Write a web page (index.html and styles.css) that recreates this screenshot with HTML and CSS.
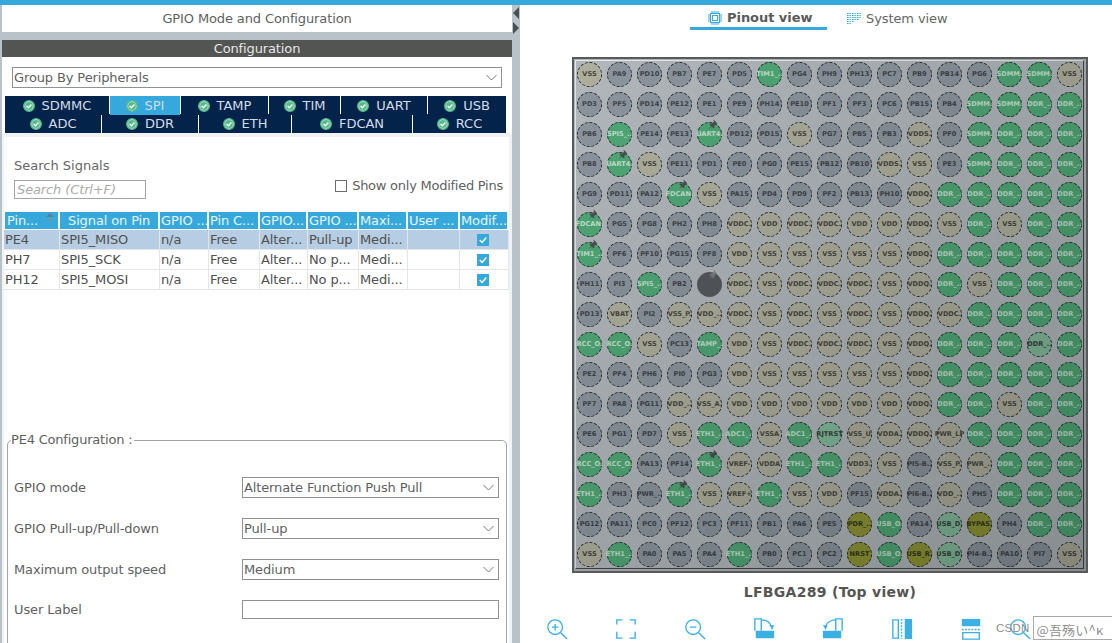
FILE: index.html
```html
<!DOCTYPE html>
<html lang="en">
<head>
<meta charset="utf-8">
<title>GPIO Mode and Configuration</title>
<link rel="stylesheet" href="styles.css">
</head>
<body>
<svg class="defs" width="0" height="0">
  <symbol id="ok" viewBox="0 0 12 12"><circle cx="6" cy="6" r="5.2" fill="#fff" stroke="#55b98a" stroke-width="1.6"/><circle cx="6" cy="6" r="3.9" fill="#55b98a"/><path d="M3.6 6l1.8 1.8 3-3.2" fill="none" stroke="#fff" stroke-width="1.4"/></symbol>
  <symbol id="chev" viewBox="0 0 12 7"><path d="M1 1l5 5 5-5" fill="none" stroke="#777" stroke-width="1"/></symbol>
  <symbol id="tick" viewBox="0 0 12 12"><rect width="12" height="12" fill="#36a9dc"/><path d="M2.8 6l2.3 2.4 4.2-5" fill="none" stroke="#fff" stroke-width="1.5"/></symbol>
  <symbol id="push" viewBox="0 0 10 10"><path d="M6 .5l3.500 3.500-1.500.5-1.500 2 .3 1.500-1 .5-1.500-1.500-3 2.500 2.500-3-1.500-1.500.5-1 1.500.3 2-1.500z" fill="#4b4f52"/></symbol>
</svg>
<div class="topbar"></div>
<div class="main">
  <section class="left">
    <h1 class="title">GPIO Mode and Configuration</h1>
    <div class="confhead">Configuration</div>
    <div class="upper">
      <div class="select groupby"><span>Group By Peripherals</span><svg class="chev"><use href="#chev"/></svg></div>
      <div class="tabs row1">
        <div class="tab"><svg class="ok"><use href="#ok"/></svg>SDMMC</div>
        <div class="tab active"><svg class="ok"><use href="#ok"/></svg>SPI</div>
        <div class="tab"><svg class="ok"><use href="#ok"/></svg>TAMP</div>
        <div class="tab"><svg class="ok"><use href="#ok"/></svg>TIM</div>
        <div class="tab"><svg class="ok"><use href="#ok"/></svg>UART</div>
        <div class="tab"><svg class="ok"><use href="#ok"/></svg>USB</div>
      </div>
      <div class="tabs row2">
        <div class="tab"><svg class="ok"><use href="#ok"/></svg>ADC</div>
        <div class="tab"><svg class="ok"><use href="#ok"/></svg>DDR</div>
        <div class="tab"><svg class="ok"><use href="#ok"/></svg>ETH</div>
        <div class="tab"><svg class="ok"><use href="#ok"/></svg>FDCAN</div>
        <div class="tab"><svg class="ok"><use href="#ok"/></svg>RCC</div>
      </div>
    </div>
    <div class="lower">
      <div class="inner">
        <div class="searchrow">
          <div class="searchcol">
            <div class="searchlabel">Search Signals</div>
            <div class="searchbox">Search (Ctrl+F)</div>
          </div>
          <label class="modified"><span class="box"></span>Show only Modified Pins</label>
        </div>
        <table class="signals">
          <colgroup><col class="c1"><col class="c2"><col class="c3"><col class="c4"><col class="c5"><col class="c6"><col class="c7"><col class="c8"><col class="c9"></colgroup>
          <thead>
            <tr><th class="first">Pin...<span class="sort"></span></th><th class="ctr">Signal on Pin</th><th>GPIO ...</th><th>Pin C...</th><th>GPIO...</th><th>GPIO ...</th><th>Maxi...</th><th>User ...</th><th>Modif...</th></tr>
          </thead>
          <tbody>
            <tr class="sel"><td>PE4</td><td>SPI5_MISO</td><td>n/a</td><td>Free</td><td>Alter...</td><td>Pull-up</td><td>Medi...</td><td></td><td class="chk"><svg class="tick"><use href="#tick"/></svg></td></tr>
            <tr><td>PH7</td><td>SPI5_SCK</td><td>n/a</td><td>Free</td><td>Alter...</td><td>No p...</td><td>Medi...</td><td></td><td class="chk"><svg class="tick"><use href="#tick"/></svg></td></tr>
            <tr><td>PH12</td><td>SPI5_MOSI</td><td>n/a</td><td>Free</td><td>Alter...</td><td>No p...</td><td>Medi...</td><td></td><td class="chk"><svg class="tick"><use href="#tick"/></svg></td></tr>
          </tbody>
        </table>
        <fieldset class="pinconf">
          <legend>PE4 Configuration :</legend>
          <div class="formrow"><span>GPIO mode</span><div class="select"><span>Alternate Function Push Pull</span><svg class="chev"><use href="#chev"/></svg></div></div>
          <div class="formrow"><span>GPIO Pull-up/Pull-down</span><div class="select"><span>Pull-up</span><svg class="chev"><use href="#chev"/></svg></div></div>
          <div class="formrow"><span>Maximum output speed</span><div class="select"><span>Medium</span><svg class="chev"><use href="#chev"/></svg></div></div>
          <div class="formrow lastrow"><span>User Label</span><div class="select text"></div></div>
        </fieldset>
      </div>
    </div>
  </section>
  <div class="gutter"><span class="arrow back"></span><span class="arrow fwd"></span></div>
  <section class="right">
    <nav class="views">
      <div class="view on">
        <svg class="vicon" viewBox="0 0 14 14"><rect x="2.500" y="2.500" width="9" height="9" fill="none" stroke="#36a9dc"/><rect x="4.500" y="4.500" width="5" height="5" fill="none" stroke="#36a9dc"/><path d="M4 0v2M6 0v2M8 0v2M10 0v2M4 12v2M6 12v2M8 12v2M10 12v2M0 4h2M0 6h2M0 8h2M0 10h2M12 4h2M12 6h2M12 8h2M12 10h2" stroke="#36a9dc"/></svg>
        <span>Pinout view</span>
      </div>
      <div class="view off">
        <svg class="vicon" viewBox="0 0 14 14"><path d="M0 1.500h4M5 1.500h4M10 1.500h4M0 3.500h4M5 3.500h4M10 3.500h4M0 5.500h4M5 5.500h4M10 5.500h4M0 7.500h4M5 7.500h4M10 7.500h2M0 9.500h4M5 9.500h2M0 11.500h4" stroke="#36a9dc" stroke-dasharray="1 .4"/></svg>
        <span>System view</span>
      </div>
    </nav>
    <div class="package">
      <div class="die">
<i class="v">VSS</i><i>PA9</i><i>PD10</i><i>PB7</i><i>PE7</i><i>PD5</i><i class="g">TIM1_..</i><i>PG4</i><i>PH9</i><i>PH13</i><i>PC7</i><i>PB9</i><i>PB14</i><i>PG6</i><i class="g">SDMM.</i><i class="g">SDMM.</i><i class="v">VSS</i>
<i>PD3</i><i>PF5</i><i>PD14</i><i>PE12</i><i>PE1</i><i>PE9</i><i>PH14</i><i>PE10</i><i>PF1</i><i>PF3</i><i>PC6</i><i>PB15</i><i>PB4</i><i class="g">SDMM.</i><i class="g">SDMM.</i><i class="g">DDR_..</i><i class="g">DDR_..</i>
<i>PB6</i><i class="g">SPI5_..</i><i>PE14</i><i>PE13</i><i class="g">UART4.<svg class="push"><use href="#push"/></svg></i><i>PD12</i><i>PD15</i><i class="v">VSS</i><i>PG7</i><i>PB5</i><i>PB3</i><i class="v">VDDS.</i><i>PF0</i><i class="g">SDMM.</i><i class="g">DDR_..</i><i class="g">DDR_..</i><i class="g">DDR_..</i>
<i>PB8</i><i class="g">UART4.<svg class="push"><use href="#push"/></svg></i><i class="v">VSS</i><i>PE11</i><i>PD1</i><i>PE0</i><i>PG0</i><i>PE15</i><i>PB12</i><i>PB10</i><i class="v">VDDS.</i><i class="v">VSS</i><i>PE3</i><i class="g">SDMM.</i><i class="g">DDR_..</i><i class="g">DDR_..</i><i class="g">DDR_..</i>
<i>PG9</i><i>PD11</i><i>PA12</i><i class="g">FDCAN.<svg class="push"><use href="#push"/></svg></i><i class="v">VSS</i><i>PA15</i><i>PD4</i><i>PD9</i><i>PF2</i><i>PB13</i><i>PH10</i><i class="v">VDDQ.</i><i class="g">DDR_..</i><i class="g">DDR_..</i><i class="g">DDR_..</i><i class="g">DDR_..</i><i class="g">DDR_..</i>
<i class="g">FDCAN.<svg class="push"><use href="#push"/></svg></i><i>PG5</i><i>PG8</i><i>PH2</i><i>PH8</i><i class="v">VDDC.</i><i class="v">VDD</i><i class="v">VDDC.</i><i class="v">VDDC.</i><i class="v">VDD</i><i class="v">VDD</i><i class="v">VDDQ.</i><i class="v">VSS</i><i class="g">DDR_..</i><i class="v">VSS</i><i class="g">DDR_..</i><i class="g">DDR_..</i>
<i class="g">TIM1_..<svg class="push"><use href="#push"/></svg></i><i>PF6</i><i>PF10</i><i>PG15</i><i>PF8</i><i class="v">VDD</i><i class="v">VSS</i><i class="v">VSS</i><i class="v">VSS</i><i class="v">VSS</i><i class="v">VSS</i><i class="v">VDDQ.</i><i class="g">DDR_..</i><i class="g">DDR_..</i><i class="g">DDR_..</i><i class="g">DDR_..</i><i class="g">DDR_..</i>
<i>PH11</i><i>PI3</i><i class="g">SPI5_..</i><i>PB2</i><i class="d"><svg class="push"><use href="#push"/></svg></i><i class="v">VDDC.</i><i class="v">VSS</i><i class="v">VDDC.</i><i class="v">VDDC.</i><i class="v">VDDC.</i><i class="v">VSS</i><i class="v">VDDQ.</i><i class="g">DDR_..</i><i class="v">VSS</i><i class="g">DDR_..</i><i class="g">DDR_..</i><i class="g">DDR_..</i>
<i>PD13</i><i class="v">VBAT</i><i>PI2</i><i class="v">VSS_P.</i><i class="v">VDD_..</i><i class="v">VDDC.</i><i class="v">VSS</i><i class="v">VDDC.</i><i class="v">VSS</i><i class="v">VDDC.</i><i class="v">VSS</i><i class="v">VDDQ.</i><i class="v">VDDC.</i><i class="g">DDR_..</i><i class="g">DDR_..</i><i class="g">DDR_..</i><i class="g">DDR_..</i>
<i class="g">RCC_O.</i><i class="g">RCC_O.</i><i class="v">VSS</i><i>PC13</i><i class="g">TAMP_.</i><i class="v">VDD</i><i class="v">VSS</i><i class="v">VDDC.</i><i class="v">VDDC.</i><i class="v">VDDC.</i><i class="v">VSS</i><i class="v">VDDQ.</i><i class="g">DDR_..</i><i class="g">DDR_..</i><i class="g">DDR_..</i><i class="l">DDR_..</i><i class="g">DDR_..</i>
<i>PE2</i><i>PF4</i><i>PH6</i><i>PI0</i><i>PG3</i><i class="v">VDD</i><i class="v">VSS</i><i class="v">VSS</i><i class="v">VSS</i><i class="v">VSS</i><i class="v">VSS</i><i class="v">VDDQ.</i><i class="g">DDR_..</i><i class="g">DDR_..</i><i class="g">DDR_..</i><i class="g">DDR_..</i><i class="g">DDR_..</i>
<i>PF7</i><i>PA8</i><i>PG11</i><i class="v">VDD_..</i><i class="v">VSS_A.</i><i class="v">VDD</i><i class="v">VDD</i><i class="v">VDD</i><i class="v">VDD</i><i class="v">VDD</i><i class="v">VDD</i><i class="v">VDDQ.</i><i class="g">DDR_..</i><i class="g">DDR_..</i><i class="v">VSS</i><i class="g">DDR_..</i><i class="g">DDR_..</i>
<i>PE6</i><i>PG1</i><i>PD7</i><i class="v">VSS</i><i class="g">ETH1_..</i><i class="g">ADC1_..</i><i class="v">VSSA</i><i class="g">ADC1_..</i><i class="l">RJTRST</i><i class="v">VSS_U</i><i class="v">VDDA.</i><i class="v">VDDQ.</i><i class="v">PWR_LP</i><i class="g">DDR_..</i><i class="g">DDR_..</i><i class="g">DDR_..</i><i class="g">DDR_..</i>
<i class="g">RCC_O.</i><i class="g">RCC_O.</i><i>PA13</i><i>PF14</i><i class="g">ETH1_..<svg class="push"><use href="#push"/></svg></i><i class="v">VREF-</i><i class="v">VDDA</i><i class="g">ETH1_..</i><i class="g">ETH1_..</i><i class="v">VDD3.</i><i class="v">VSS</i><i>PI5-B..</i><i class="v">VSS_P.</i><i class="v">PWR_..</i><i class="g">DDR_..</i><i class="g">DDR_..</i><i class="g">DDR_..</i>
<i class="g">ETH1_..</i><i>PH3</i><i>PWR_..</i><i class="g">ETH1_..<svg class="push"><use href="#push"/></svg></i><i class="v">VSS</i><i class="v">VREF+</i><i class="g">ETH1_..</i><i class="v">VSS</i><i class="v">VDD</i><i>PF15</i><i class="v">VDDA.</i><i>PI6-B..</i><i class="v">VDD_..</i><i>PH5</i><i class="g">DDR_..</i><i class="g">DDR_..</i><i class="g">DDR_..</i>
<i>PG12</i><i>PA11</i><i>PC0</i><i>PF12</i><i>PC3</i><i>PF11</i><i>PB1</i><i>PA6</i><i>PE5</i><i class="o">PDR_..</i><i class="g">USB_O.</i><i>PA14</i><i class="l">USB_D.</i><i class="o">BYPAS.</i><i>PH4</i><i class="g">DDR_..</i><i class="g">DDR_..</i>
<i class="v">VSS</i><i class="g">ETH1_..</i><i>PA0</i><i>PA5</i><i>PA4</i><i class="g">ETH1_..</i><i>PB0</i><i>PC1</i><i>PC2</i><i class="o">NRST</i><i class="g">USB_O.</i><i class="o">USB_R.</i><i class="l">USB_D.</i><i>PI4-B..</i><i>PA10</i><i>PI7</i><i class="v">VSS</i>
      </div>
    </div>
    <div class="pkgname">LFBGA289 (Top view)</div>
    <div class="toolbar">
      <svg class="tool" viewBox="0 0 24 24"><circle cx="10" cy="10" r="8"/><path d="M16 16l7 7M6.500 10h7M10 6.500v7"/></svg>
      <svg class="tool" viewBox="0 0 24 24"><path d="M2 7V2h6M16 2h6v5M22 15v7h-6M8 22H2v-7"/></svg>
      <svg class="tool" viewBox="0 0 24 24"><circle cx="10" cy="10" r="8"/><path d="M16 16l7 7M6.500 10h7"/></svg>
      <svg class="tool" viewBox="0 0 24 24"><path d="M2 14V1h7v13M9 2c5 0 9 2 11 7"/><path class="fill" d="M18 8h5l-2 5zM3 14h20v8H3z"/></svg>
      <svg class="tool" viewBox="0 0 24 24"><path d="M22 14V1h-7v13M15 2c-5 0-9 2-11 7"/><path class="fill" d="M1 8h5l-2 5zM1 14h20v8H1z"/></svg>
      <svg class="tool" viewBox="0 0 24 24"><path d="M2 2h6v20H2z"/><path class="dash" d="M11.500 1v22"/><path class="fill" d="M15 1h8v22h-8z"/></svg>
      <svg class="tool" viewBox="0 0 24 24"><path class="fill" d="M2 1h20v8H2z"/><path class="dash" d="M2 12.500h20"/><path d="M3 16h18v7H3z"/></svg>
      <svg class="tool last" viewBox="0 0 24 24"><circle cx="10" cy="10" r="8"/><path d="M16 16l7 7"/></svg>
    </div>
    <div class="watermark"><span>CSDN</span><div class="wmbox">@吾殇い^κ</div></div>
  </section>
</div>
</body>
</html>
```
FILE: styles.css
```css
*{box-sizing:border-box}
html,body{margin:0;padding:0;height:643px;overflow:hidden;background:#fff}
body{font:13px/1.2 "DejaVu Sans",Verdana,sans-serif;color:#5a5a5a;letter-spacing:-.12px}
.defs{position:absolute}
.topbar{height:5px;background:#36a9dc}
.main{display:flex;height:638px;overflow:hidden}

/* left panel */
.left{width:512px;background:#b8c2c8;padding-left:2px;display:flex;flex-direction:column;overflow:hidden}
.title{margin:0;height:27px;background:#fff;font:400 13px/27px "DejaVu Sans",sans-serif;text-align:center;color:#5f5f5f}
.confhead{margin-top:8px;height:17px;background:#535553;color:#e6e6e6;font-size:13px;line-height:17px;text-align:center;flex:none}
.upper{background:#fff;height:76px;padding:10px 6px 0 3px;flex:none}
.select{display:flex;align-items:center;justify-content:space-between;height:21px;border:1px solid #8f9294;background:#fff;padding:0 3px 0 1px;color:#5f5f5f;line-height:19px;white-space:nowrap}
.groupby{margin-left:7px;width:490px}
.chev{width:13px;height:7px;flex:none}
.tabs{display:grid;column-gap:1px}
.row1{margin-top:8px;height:17px;grid-template-columns:104px 70px 87px 71px 86px 78px}
.row2{margin-top:1px;height:19px;grid-template-columns:96px 96px 92px 120px 93px}
.tab{background:#03234b;color:#d3dde8;display:flex;align-items:center;justify-content:center;gap:7px;font-size:13px;line-height:1;letter-spacing:0}
.tab.active{background:#36a9dc;height:19px;position:relative}
.ok{width:12px;height:12px;flex:none}
.lower{flex:1;background:#f0f2f4;padding:4px 3px 0 2px;min-height:0}
.inner{background:#fff;height:100%}
.searchrow{display:flex;justify-content:space-between;height:75px;padding:21px 6px 0 10px}
.searchlabel{color:#666;line-height:16px;letter-spacing:0}
.searchbox{margin-top:6px;width:132px;height:19px;border:1px solid #a3a6a8;color:#aaa;font-style:italic;line-height:17px;padding-left:2px;white-space:nowrap}
.modified{display:flex;align-items:center;gap:5px;height:14px;margin-top:21px;color:#5f5f5f;white-space:nowrap;letter-spacing:-.25px}
.box{width:12px;height:12px;border:1px solid #6d6d6d;background:#fff}

.signals{table-layout:fixed;width:505px;border-collapse:separate;border-spacing:0;font-size:13px}
.c1{width:56px}.c2{width:100px}.c3{width:49px}.c4{width:51px}.c5{width:48px}.c6{width:51px}.c7{width:49px}.c8{width:52px}.c9{width:49px}
.signals th{height:18px;padding:0 0 0 1px;background:#36a9dc;background-clip:padding-box;border-right:2px solid #fff;border-bottom:1px solid #fff;color:#e8f5fb;font-weight:400;text-align:left;line-height:17px;white-space:nowrap;overflow:hidden}
.signals th.first{border-left:1px solid #fff;position:relative;padding-left:2px}
.signals th.ctr{padding-left:8px}
.sort::before,.sort::after{content:"";position:absolute;left:41px;width:0;height:0;border:4px solid transparent}
.sort::before{top:1px;border-top:0;border-bottom:4px solid #5d7f92}
.sort::after{top:7px;border-bottom:0;border-top:4px solid #5d9bbb}
.signals td{height:20px;padding:0 0 0 1px;border-right:1px solid #e2e6ea;border-bottom:1px solid #e2e6ea;color:#505050;line-height:19px;white-space:nowrap;overflow:hidden}
.sel td{background:#b6cde3}
.signals td.chk{padding:0}
.tick{display:block;width:12px;height:12px;margin-left:17px}

.pinconf{margin:142px 0 0 3px;width:500px;height:260px;padding:29px 8px 0 6px;border:1px solid #a0a5a9;border-radius:5px;min-width:0}
.pinconf legend{padding:0 2px 0 0;margin-left:-3px;line-height:16px;color:#5f5f5f;font-size:13px;letter-spacing:-.2px}
.formrow{display:grid;grid-template-columns:228px 257px;align-items:center;height:21px;margin-bottom:20px;color:#5f5f5f}
.lastrow{margin-top:-1px}
.select.text{height:19px}

/* gutter */
.gutter{width:8px;background:#b8c2c8;display:flex;flex-direction:column;gap:3px;padding:2px 0 0 1px;flex:none}
.arrow{display:block;width:6px;height:12px;border-style:solid;border-width:6px 0;border-color:transparent}
.back{border-right:6px solid #4a4f53}
.fwd{border-left:6px solid #4a4f53}

/* right panel */
.right{flex:1;display:flex;flex-direction:column;align-items:flex-start;position:relative;min-width:0;letter-spacing:0}
.views{display:flex;height:25px;width:100%;padding-left:170px;gap:20px;flex:none}
.view{display:flex;align-items:center;gap:5px;height:25px;padding-top:3px;color:#666;letter-spacing:-.1px;padding-bottom:0}
.view.on{width:137px;padding-left:18px;border-bottom:3px solid #36a9dc;font-weight:700;color:#5a5a5a;letter-spacing:-.05px}
.vicon{width:14px;height:14px;flex:none}

.package{margin:27px 0 0 52px;width:516px;height:516px;border:2px solid #575a5b;position:relative;flex:none;overflow:hidden;background:#b1b7bb}
.package::after{content:"";position:absolute;inset:0;background:linear-gradient(135deg,rgba(0,0,0,0),rgba(0,0,0,.23));pointer-events:none}
.die{display:grid;grid-template-columns:repeat(17,25px);grid-auto-rows:25px;gap:5px;margin:1px 2px 2px 1px;padding:1px;width:509px;height:509px;border:1px solid;border-color:#e4e7e8 #454749 #454749 #e4e7e8}
.die i{position:relative;display:flex;align-items:center;justify-content:center;border-radius:50%;border:1px dashed #24282b;background:#8c959e;color:#3c4349;font:700 6.6px/1 "DejaVu Sans",sans-serif;white-space:nowrap;letter-spacing:0}
.die i.v{background:#aeaf9d;color:#46473d}
.die i.g{background:#4fa876;color:#c4e0cf}
.die i.l{background:#83bb9c;color:#34423a}
.die i.o{background:#8f9636;color:#35361a}
.die i.d{background:#55595d;border-color:#55595d}
.push{position:absolute;right:3px;top:-4px;width:11px;height:11px}
.d .push{opacity:.8;filter:brightness(1.7)}

.pkgname{margin:10px 0 0 52px;width:516px;height:18px;text-align:center;font-weight:700;font-size:14px;line-height:18px;letter-spacing:.3px;color:#555;flex:none}
.toolbar{display:flex;gap:47px;width:100%;padding-left:26px;margin-top:17px;flex:none}
.tool{width:22px;height:22px;flex:none;fill:none;stroke:#3bb0e4;stroke-width:1.500}
.tool .fill{fill:#3bb0e4;stroke:none}
.tool .dash{stroke-dasharray:2 1.500}
.tool.last{margin-left:-20px}
.watermark{position:absolute;left:476px;top:611px;display:flex;align-items:center;gap:4px;color:rgba(125,125,125,.9);font:11.5px "Liberation Sans","Noto Sans CJK SC",sans-serif;letter-spacing:.2px}
.wmbox{width:82px;height:24px;border:1px solid #aaa;background:rgba(255,255,255,.75);padding:3px 0 0 2px;white-space:nowrap;font-family:"Noto Sans CJK SC",sans-serif;font-size:13px}
```
